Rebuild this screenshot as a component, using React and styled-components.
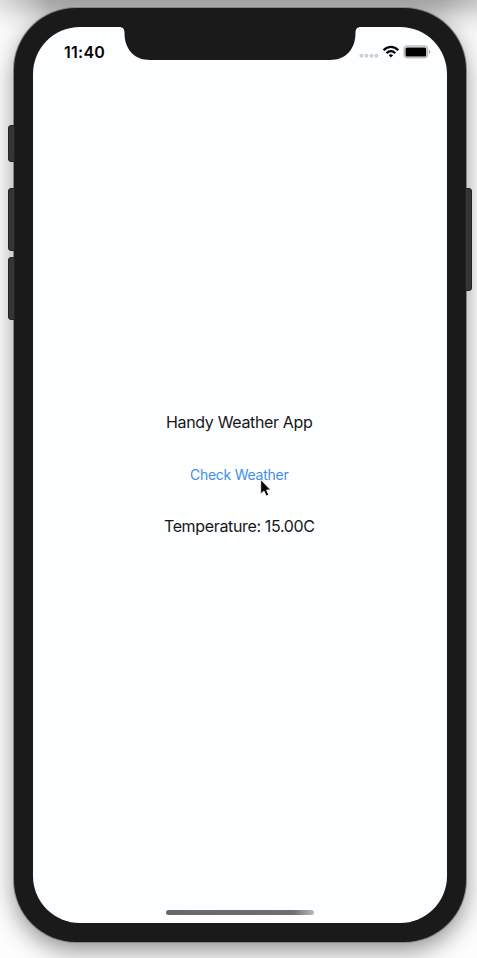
import React from "react";
import styled, { createGlobalStyle } from "styled-components";

const GlobalStyle = createGlobalStyle`
  * { box-sizing: border-box; }
  body { margin: 0; background: #fdfdfd; }
`;

const Desktop = styled.main`
  width: 477px;
  height: 958px;
  overflow: hidden;
  padding: 8px 11px 16px 14px;
  background:
    linear-gradient(to right, rgba(253, 253, 253, 0.65), transparent 50px, transparent 440px, rgba(253, 253, 253, 0.35)),
    linear-gradient(to bottom, #a8a8a8 0, #b4b4b4 6px, #dadada 18px, rgba(240, 240, 240, 0.6) 32px, transparent 60px) #fdfdfd;
  font-family: Inter, "Liberation Sans", sans-serif;
`;

const Device = styled.div`
  position: relative;
  width: 452px;
  height: 934px;
  padding: 19px;
  border-radius: 62px;
  background: #1a1a1a;
  box-shadow: 0 0 0 1px #858585, 0 9px 24px rgba(0, 0, 0, 0.42);
`;

const SideButton = styled.span`
  position: absolute;
  top: ${(p) => p.$top}px;
  ${(p) => p.$side}: -6px;
  width: 7px;
  height: ${(p) => p.$height}px;
  border: 1px solid #242424;
  border-radius: ${(p) => (p.$side === "left" ? "3px 1px 1px 3px" : "1px 3px 3px 1px")};
  background: #353535;
`;

const Screen = styled.div`
  position: relative;
  display: flex;
  flex-direction: column;
  width: 414px;
  height: 896px;
  border-radius: 47px;
  background: #fdfeff;
  color: #171717;
  overflow: hidden;
`;

const Notch = styled.svg`
  position: absolute;
  top: 0;
  left: 86px;
`;

const StatusBar = styled.header`
  display: flex;
  align-items: center;
  justify-content: space-between;
  height: 50px;
  padding: 0 16px 0 31px;
`;

const Clock = styled.time`
  font-size: 16px;
  font-weight: 600;
  line-height: 20px;
  letter-spacing: 0.25px;
  color: #050505;
`;

const StatusIcons = styled.svg`
  display: block;
`;

const Content = styled.section`
  flex: 1;
  display: flex;
  flex-direction: column;
  align-items: center;
  padding: 335px 1.5px 0 0;
`;

const Label = styled.p`
  margin: 0;
  font-size: 16px;
  line-height: 20px;
  letter-spacing: -0.35px;
  white-space: nowrap;
`;

const WeatherButton = styled.button`
  margin: 33px 0 31px;
  padding: 0;
  border: 0;
  background: none;
  color: #3f8fe6;
  font: 400 14px/20px Inter, "Liberation Sans", sans-serif;
  letter-spacing: -0.25px;
`;

const HomeIndicator = styled.div`
  align-self: center;
  width: 148px;
  height: 5px;
  margin-bottom: 8px;
  border-radius: 3px;
  background: linear-gradient(to right, #686868 0, #707070 86%, #b9b9b9 100%);
`;

const Pointer = styled.svg`
  position: absolute;
  left: 225px;
  top: 450px;
`;

export default function App() {
  return (
    <>
      <GlobalStyle />
      <Desktop>
        <Device>
          <SideButton $side="left" $top={117} $height={37} />
          <SideButton $side="left" $top={180} $height={63} />
          <SideButton $side="left" $top={249} $height={63} />
          <SideButton $side="right" $top={180} $height={103} />
          <Screen>
            <Notch width="242" height="33" viewBox="0 0 242 33" aria-hidden="true">
              <path d="M0 0C4 0 5.5 2 5.5 6C5.5 22 15 33 31 33H211C227 33 236.500 22 236.500 6C236.500 2 238 0 242 0Z" fill="#1a1a1a" />
            </Notch>
            <StatusBar>
              <Clock>11:40</Clock>
              <StatusIcons width="72" height="16" viewBox="0 0 72 16" aria-label="Wi-Fi and battery">
                <g fill="#d0d0d0">
                  <circle cx="2.400" cy="11.700" r="2" />
                  <circle cx="7.400" cy="11.700" r="2" />
                  <circle cx="12.400" cy="11.700" r="2" />
                  <circle cx="17.400" cy="11.700" r="2" />
                </g>
                <g fill="none" stroke="#050505" strokeWidth="2.300">
                  <path d="M24.600 6.200C29 1.700 34.800 1.700 39.200 6.200" />
                  <path d="M27.500 9.200C30.100 6.400 33.700 6.400 36.300 9.200" />
                </g>
                <path d="M29.700 11.200C31.100 9.900 32.700 9.900 34.100 11.200L31.900 13.500Z" fill="#050505" />
                <rect x="45.200" y="2" width="23.300" height="11.600" rx="3" fill="#fdfeff" stroke="#bdbdbd" strokeWidth="1.600" />
                <rect x="46.500" y="3.400" width="20.700" height="9" rx="1.500" fill="#000" />
                <path d="M70 5.800Q71.500 6.500 71.500 7.800T70 9.800Z" fill="#aaa" />
              </StatusIcons>
            </StatusBar>
            <Content>
              <Label>Handy Weather App</Label>
              <WeatherButton type="button">Check Weather</WeatherButton>
              <Label>Temperature: 15.00C</Label>
            </Content>
            <HomeIndicator />
            <Pointer width="16" height="22" viewBox="0 0 16 22" aria-hidden="true">
              <path d="M2.700 2.600V17L6 14L8.200 19L10.700 17.900L8.600 13H12.700Z" fill="#080808" stroke="#fff" strokeWidth="0.800" />
            </Pointer>
          </Screen>
        </Device>
      </Desktop>
    </>
  );
}
